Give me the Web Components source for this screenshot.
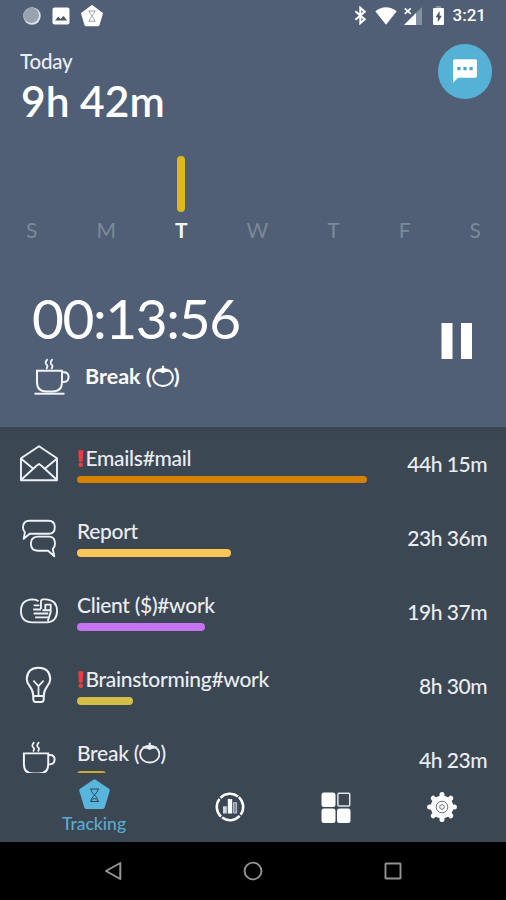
<!DOCTYPE html>
<html lang="en">
<head>
<meta charset="utf-8">
<title>Tracking</title>
<style>
    body {
        margin: 0;
        background: #000;
        font-family: Lato, "Liberation Sans", sans-serif;
    }
</style>
</head>
<body>
<tracker-app></tracker-app>

<script>
const ICONS = {
    record: ['0 0 18 18', '<circle cx="9" cy="9" r="8.7" fill="#dfe4ea"/><circle cx="8.2" cy="8.2" r="7.8" fill="#99a3af"/>'],
    image: ['0 0 18 18', '<rect x=".5" y=".5" width="17" height="17" rx="2" fill="#fff"/><path d="M3 13.5l3.3-4 2.2 2.5 3-3 3.7 4.5z" fill="#4a5667"/>'],
    badge: ['0 0 22 22', '<path d="M11 1.6L20.4 8.6 17 19.8H5L1.6 8.6z" fill="#fff" stroke="#fff" stroke-width="3" stroke-linejoin="round"/><path d="M7.5 6h7M7.5 16.3h7M8.3 6c0 3 5.4 7 5.4 10.3M13.7 6c0 3-5.4 7-5.4 10.3" fill="none" stroke="#9aa3ad" stroke-width="1"/>'],
    bluetooth: ['0 0 14 20', '<path d="M1.5 5.5l10 8.5-4.7 4.3V1.7l4.7 4.3-10 8.5" fill="none" stroke="#fff" stroke-width="2.2"/>'],
    wifi: ['0 0 22 18', '<path d="M11 17.7L.3 4.2Q11-3.8 21.7 4.2z" fill="#fff"/>'],
    signal: ['0 0 18 18', '<path d="M18 0v18H0z" fill="#8591a1"/><path d="M12 6v12H0z" fill="#fff"/><path d="M.8 1.3l6 5.6M6.8 1.3l-6 5.6" stroke="#fff" stroke-width="1.6"/>'],
    battery: ['0 0 11 19', '<rect x="3" width="5" height="3" fill="#8591a1"/><rect y="2" width="11" height="17" rx="1" fill="#fff"/><path d="M6.6 5L2.6 11.2h2.2v5l4-6.4H6.6z" fill="#46546a"/>'],
    chat: ['0 0 24 24', '<path d="M1.7.3h20.6Q24 .3 24 2v15q0 1.7-1.7 1.7H5.2L0 23.7V2Q0 .3 1.7.3z" fill="#fff"/><path d="M4.3 8h3.2v3.2H4.3zM10.4 8h3.2v3.2h-3.2zM16.5 8h3.2v3.2h-3.2z" fill="#48a4cc"/>'],
    pause: ['0 0 31 36', '<path d="M.5 0h11v36H.5zM20 0h11v36H20z" fill="#fff"/>'],
    cup: ['0 0 36 37', '<g fill="none" stroke="#f1f5fa" stroke-width="2"><path d="M3 12.7h25V24q0 9.5-9.5 9.5h-6Q3 33.5 3 24zM28 14.3h1.8q4.8 0 4.8 4.7t-4.8 5H28"/><path d="M.5 35.7h30"/><path d="M13.6 1.2q-3.5 3.8-.7 5.7 1.4 1.2-.5 4M18.6 1.2q-3.5 3.8-.7 5.7 1.4 1.2-.5 4" stroke-width="1.8"/></g>'],
    mail: ['0 0 38 37', '<g fill="none" stroke="#eef2f6" stroke-width="1.9" stroke-linejoin="round"><path d="M1 13.3L19 1.3l18 12V35.2H1z"/><path d="M1.5 14l11.5 9.5M36.5 14L25 23.5M1.5 34.5L16.5 20.8 19 19l2.5 1.8L36.5 34.5"/></g>'],
    talk: ['0 0 38 40', '<g fill="none" stroke="#eef2f6" stroke-width="1.9" stroke-linejoin="round"><path d="M9.5 2.7h19q6.3 0 6.3 6.5t-6.3 6.6H9.7l-6 5 1.2-6.5Q3 12.5 3 9.3q0-6.6 6.5-6.6z"/><path d="M17.5 18.6h11.7q5.8.2 5.8 6.9 0 3.8-2.2 5.6l1.5 7.2-6.2-5.6H17.5q-6.6-.3-6.6-7t6.6-7.100z"/></g>'],
    hands: ['0 0 39 26', '<g fill="none" stroke="#eef2f6" stroke-width="1.9" stroke-linejoin="round"><path d="M19 3Q17 1.100 13 1.100 1 1.500 1 13t12 11.700h14.500Q38 24 38 13T27 1.100h-3.500Q21.500 1.300 21.500 3.500V11"/><path d="M14 7.300h6M13.500 11.500h8M14 15.600h15M15.500 19.500h14.500M26 11.500V6.500h5.500v5.700H23M31.500 9v5l-3 9.500"/></g>'],
    bulb: ['0 0 28 38', '<g fill="none" stroke="#eef2f6" stroke-width="2.1" stroke-linejoin="round"><path d="M8.6 30.5Q8.5 25 5 20.5 1.8 16.5 1.8 12.7 2.6 1.3 14 1.2T26.2 12.7q0 3.8-3.2 7.8-3.5 4.5-3.6 10z"/><path d="M8.6 30.5v3.5q.2 2.7 2.8 2.7h5.2q2.6 0 2.8-2.7v-3.5"/><path d="M14 30V20M8.7 14.5L14 20.2l5.3-5.7" stroke-width="1.8"/></g>'],
    tomato: ['0 0 20 20', '<ellipse cx="10" cy="11.3" rx="9" ry="7.8" fill="none" stroke="currentColor" stroke-width="1.7"/><path d="M3 4.300q4.500 0 6-.8V.7h2v2.800q1.500.8 6 .8-1.200 2.500-4.500 2L10 7.400l-2.500-1.100Q4.200 6.800 3 4.300z" fill="currentColor"/>'],
    mark: ['0 0 6 19', '<path d="M.2.5h5.600L5 13H1z" fill="#ee3b3f"/><circle cx="3" cy="16.300" r="2.500" fill="#ee3b3f"/>'],
    tracking: ['0 0 31 31', '<path d="M15.5 2.3L28.8 11.5 23.8 28H7.2L2.2 11.5z" fill="#59b5dc" stroke="#59b5dc" stroke-width="4" stroke-linejoin="round"/><path d="M11 10h9M11 22.5h9M12 10c0 4.5 7 7.5 7 12.5M19 10c0 4.5-7 7.5-7 12.5M13 21.5l2.5-2.5 2.5 2.5" fill="none" stroke="#27475c" stroke-width="1"/>'],
    stats: ['0 0 30 30', '<circle cx="15" cy="15" r="13.2" fill="none" stroke="#fff" stroke-width="2.5" stroke-dasharray="19.2 1.54" transform="rotate(-48 15 15)"/><path d="M12.8 7h4.400v14.500h-4.400z" fill="#fff"/><path d="M8 14.300h3.800v7.200H8z" fill="#d2d8df"/><path d="M18.6 10.700h3v10.300h-3z" fill="#7f8995" stroke="#c2cad3"/>'],
    blocks: ['0 0 30 31', '<g fill="#fff"><rect x=".5" y=".5" width="14" height="14.5" rx="2.5"/><rect x=".5" y="16.5" width="14" height="14.5" rx="2.5"/><rect x="16" y="16.5" width="13.5" height="14.5" rx="2.5"/></g><rect x="16.9" y="1.3" width="11.8" height="12.6" rx="1" fill="none" stroke="#dfe4ea" stroke-width="1.5"/>'],
    gear: ['0 0 30 30', '<circle cx="15" cy="15" r="11.3" fill="#fff"/><g fill="none" stroke="#fff" stroke-width="5" stroke-linecap="round"><path d="M15 2.6v24.8M2.6 15h24.8M6.2 6.2l17.6 17.6M23.8 6.2L6.2 23.8"/></g><g fill="none" stroke="#6b7480"><circle cx="15" cy="15" r="5.8"/><circle cx="15" cy="15" r="2.3"/></g>'],
    back: ['0 0 18 20', '<path d="M16.3 2v16L2 10z" fill="none" stroke="#939393" stroke-width="2" stroke-linejoin="round"/>'],
    home: ['0 0 20 20', '<circle cx="10" cy="10" r="8.4" fill="none" stroke="#939393" stroke-width="1.9"/>'],
    recent: ['0 0 18 18', '<rect x="1.5" y="1.5" width="15" height="15" rx=".5" fill="none" stroke="#939393" stroke-width="1.9"/>']
};

// <app-icon name="cup" w="36" h="37">
class AppIcon extends HTMLElement {
    constructor() {
        super();
        this.attachShadow({ mode: 'open' });
    }

    connectedCallback() {
        const [box, shapes] = ICONS[this.getAttribute('name')];
        this.shadowRoot.innerHTML = `
            <style>
                :host { display: inline-block; flex: none; line-height: 0; }
                svg { display: block; }
            </style>
            <svg viewBox="${box}" width="${this.getAttribute('w')}" height="${this.getAttribute('h')}">${shapes}</svg>
        `;
    }
}

class StatusBar extends HTMLElement {
    constructor() {
        super();
        this.attachShadow({ mode: 'open' });
        this.shadowRoot.innerHTML = `
            <style>
                :host {
                    display: flex;
                    justify-content: space-between;
                    height: 31px;
                    padding: 0 20px 0 23px;
                    font: 500 17px/31px Roboto, sans-serif;
                    color: #fff;
                }
                div { display: flex; align-items: center; }
                .left { gap: 11px; }
                app-icon[name="wifi"] { margin: 0 7px 0 8px; }
                app-icon[name="battery"] { margin: 0 9px 0 11px; }
            </style>
            <div class="left">
                <app-icon name="record" w="18" h="18"></app-icon>
                <app-icon name="image" w="18" h="18"></app-icon>
                <app-icon name="badge" w="22" h="22"></app-icon>
            </div>
            <div>
                <app-icon name="bluetooth" w="13" h="19"></app-icon>
                <app-icon name="wifi" w="22" h="18"></app-icon>
                <app-icon name="signal" w="18" h="18"></app-icon>
                <app-icon name="battery" w="11" h="19"></app-icon>
                <span>3:21</span>
            </div>
        `;
    }
}

class WeekChart extends HTMLElement {
    constructor() {
        super();
        this.attachShadow({ mode: 'open' });
    }

    connectedCallback() {
        const today = Number(this.getAttribute('today'));
        const days = ['S', 'M', 'T', 'W', 'T', 'F', 'S'];

        this.shadowRoot.innerHTML = `
            <style>
                :host {
                    display: flex;
                    justify-content: space-between;
                    height: 88px;
                    padding: 0 25px 0 26px;
                    color: #7c8999;
                    font-size: 21px;
                    line-height: 26px;
                }
                div {
                    display: flex;
                    flex-direction: column;
                    justify-content: flex-end;
                    align-items: center;
                }
                i {
                    width: 7.5px;
                    height: 56.5px;
                    margin-bottom: 5px;
                    border-radius: 4px;
                    background: #e0b817;
                }
                .today { color: #f2f6fb; font-weight: bold; }
            </style>
            ${days.map((day, i) => i === today
                ? `<div class="today"><i></i><span>${day}</span></div>`
                : `<div><span>${day}</span></div>`).join('')}
        `;
    }
}

class TrackerHero extends HTMLElement {
    constructor() {
        super();
        this.attachShadow({ mode: 'open' });
        this.shadowRoot.innerHTML = `
            <style>
                :host {
                    display: flex;
                    flex-direction: column;
                    height: 427px;
                    background: #505f75;
                    color: #fff;
                }
                header {
                    display: flex;
                    justify-content: space-between;
                    height: 124px;
                    padding: 13px 14px 0 20px;
                    box-sizing: border-box;
                }
                .label { font-size: 20.5px; line-height: 34px; color: #e9edf3; font-weight: 500; letter-spacing: -0.2px; }
                .total { padding-left: 1px; font-size: 42.5px; line-height: 45px; font-weight: 600; }
                .fab {
                    display: flex;
                    justify-content: center;
                    align-items: center;
                    width: 54.5px;
                    height: 54.5px;
                    border-radius: 50%;
                    background: #56b1d7;
                }
                .timer {
                    display: flex;
                    justify-content: space-between;
                    align-items: center;
                    padding: 42px 34px 0 32px;
                }
                .timer > app-icon { margin-top: 2px; }
                .clock { font-size: 55px; line-height: 66px; letter-spacing: -1.4px; }
                .task {
                    display: flex;
                    align-items: center;
                    gap: 15px;
                    height: 38px;
                    margin-top: 6px;
                    padding-left: 2px;
                    font-size: 21.5px;
                    font-weight: bold;
                }
                .task app-icon[name="tomato"] { vertical-align: -3px; }
            </style>
            <status-bar></status-bar>
            <header>
                <div>
                    <div class="label">Today</div>
                    <div class="total">9h 42m</div>
                </div>
                <div class="fab"><app-icon name="chat" w="24" h="24"></app-icon></div>
            </header>
            <week-chart today="2"></week-chart>
            <div class="timer">
                <div>
                    <div class="clock">00:13:56</div>
                    <div class="task">
                        <app-icon name="cup" w="36" h="37"></app-icon>
                        <span>Break (<app-icon name="tomato" w="22" h="22"></app-icon>)</span>
                    </div>
                </div>
                <app-icon name="pause" w="31" h="36"></app-icon>
            </div>
        `;
    }
}

class TaskRow extends HTMLElement {
    constructor() {
        super();
        this.attachShadow({ mode: 'open' });
    }

    connectedCallback() {
        const minutes = Number(this.getAttribute('minutes'));
        const width = minutes / 2655 * 289.5;

        this.shadowRoot.innerHTML = `
            <style>
                :host {
                    display: flex;
                    align-items: center;
                    height: 73.8px;
                    flex: none;
                    padding-right: 19px;
                    font-size: 21px;
                    font-weight: 500;
                    letter-spacing: -0.3px;
                    color: #e9edf2;
                }
                .icon {
                    display: flex;
                    justify-content: center;
                    width: 77px;
                    flex: none;
                }
                .main { flex: 1; }
                .name { line-height: 30px; white-space: nowrap; }
                .bar {
                    width: ${width}px;
                    height: 7.5px;
                    margin: 3px 0 2px;
                    border-radius: 4px;
                    background: ${this.getAttribute('color')};
                }
                .time { letter-spacing: -0.5px; }
            </style>
            <div class="icon"><slot name="icon"></slot></div>
            <div class="main">
                <div class="name"><slot></slot></div>
                <div class="bar"></div>
            </div>
            <div class="time">${Math.floor(minutes / 60)}h ${minutes % 60}m</div>
        `;
    }
}

class TaskList extends HTMLElement {
    constructor() {
        super();
        this.attachShadow({ mode: 'open' });
        this.shadowRoot.innerHTML = `
            <style>
                :host {
                    display: flex;
                    flex-direction: column;
                    height: 345.5px;
                    overflow: hidden;
                    background: linear-gradient(#39454f, #3c4754 8px);
                }
                app-icon[name="mark"] { margin: 0 2px 0 1px; vertical-align: -2px; }
                app-icon[name="tomato"] { vertical-align: -3px; }
            </style>
            <task-row minutes="2655" color="#d78103">
                <app-icon slot="icon" name="mail" w="38" h="37"></app-icon>
                <app-icon name="mark" w="5.5" h="19"></app-icon>Emails#mail
            </task-row>
            <task-row minutes="1416" color="#fdc557">
                <app-icon slot="icon" name="talk" w="38" h="40"></app-icon>
                Report
            </task-row>
            <task-row minutes="1177" color="#c573ee">
                <app-icon slot="icon" name="hands" w="38" h="26"></app-icon>
                Client ($)#work
            </task-row>
            <task-row minutes="510" color="#d3be48">
                <app-icon slot="icon" name="bulb" w="27" h="38"></app-icon>
                <app-icon name="mark" w="5.5" h="19"></app-icon>Brainstorming#work
            </task-row>
            <task-row minutes="263" color="#d0aa2d">
                <app-icon slot="icon" name="cup" w="35" h="36"></app-icon>
                Break (<app-icon name="tomato" w="21.5" h="21.5"></app-icon>)
            </task-row>
        `;
    }
}

class TabBar extends HTMLElement {
    constructor() {
        super();
        this.attachShadow({ mode: 'open' });
        this.shadowRoot.innerHTML = `
            <style>
                :host {
                    display: flex;
                    height: 69.5px;
                    padding: 0 11.5px;
                    background: #3c4754;
                    color: #59acd3;
                    font-size: 17.5px;
                    font-weight: 500;
                    line-height: 24px;
                }
                div {
                    flex: 0 0 106px;
                    display: flex;
                    flex-direction: column;
                    justify-content: center;
                    align-items: center;
                }
                .active { flex: 1; gap: 2px; }
            </style>
            <div class="active">
                <app-icon name="tracking" w="31" h="31"></app-icon>
                <span>Tracking</span>
            </div>
            <div><app-icon name="stats" w="30" h="30"></app-icon></div>
            <div><app-icon name="blocks" w="30" h="31"></app-icon></div>
            <div><app-icon name="gear" w="30" h="30"></app-icon></div>
        `;
    }
}

class SystemBar extends HTMLElement {
    constructor() {
        super();
        this.attachShadow({ mode: 'open' });
        this.shadowRoot.innerHTML = `
            <style>
                :host {
                    display: flex;
                    height: 58px;
                    padding: 0 43px;
                    background: #000;
                }
                div { flex: 1; display: flex; justify-content: center; align-items: center; }
            </style>
            <div><app-icon name="back" w="18" h="20"></app-icon></div>
            <div><app-icon name="home" w="20" h="20"></app-icon></div>
            <div><app-icon name="recent" w="18" h="18"></app-icon></div>
        `;
    }
}

class TrackerApp extends HTMLElement {
    constructor() {
        super();
        this.attachShadow({ mode: 'open' });
        this.shadowRoot.innerHTML = `
            <style>
                :host {
                    display: flex;
                    flex-direction: column;
                    width: 506px;
                    height: 900px;
                    overflow: hidden;
                }
            </style>
            <tracker-hero></tracker-hero>
            <task-list></task-list>
            <tab-bar></tab-bar>
            <system-bar></system-bar>
        `;
    }
}

customElements.define('app-icon', AppIcon);
customElements.define('status-bar', StatusBar);
customElements.define('week-chart', WeekChart);
customElements.define('tracker-hero', TrackerHero);
customElements.define('task-row', TaskRow);
customElements.define('task-list', TaskList);
customElements.define('tab-bar', TabBar);
customElements.define('system-bar', SystemBar);
customElements.define('tracker-app', TrackerApp);
</script>
</body>
</html>
